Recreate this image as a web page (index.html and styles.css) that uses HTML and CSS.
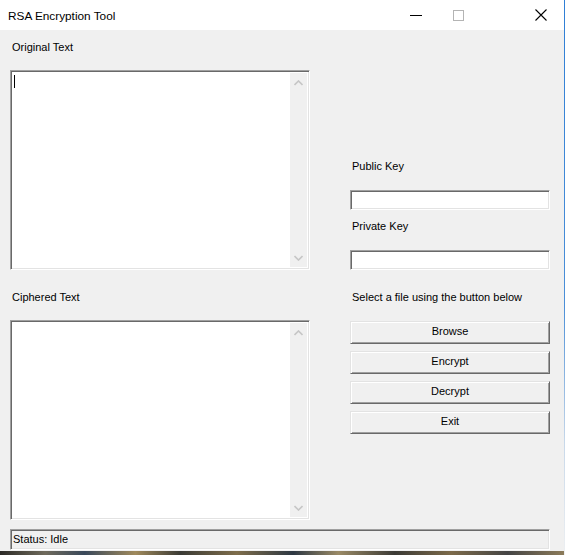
FILE: index.html
```html
<!DOCTYPE html>
<html>
<head>
<meta charset="utf-8">
<title>RSA Encryption Tool</title>
<link rel="stylesheet" href="styles.css">
</head>
<body>
<div class="screen">
  <div class="window">
    <div class="titlebar">
      <span class="title">RSA Encryption Tool</span>
      <div class="controls">
        <svg class="ic-min" width="12" height="11" viewBox="0 0 12 11"><line x1="0" y1="5.5" x2="12" y2="5.5" stroke="#000" stroke-width="1"/></svg>
        <svg class="ic-max" width="11" height="11" viewBox="0 0 11 11"><rect x="0.5" y="0.5" width="10" height="10" fill="none" stroke="#b4b4b4" stroke-width="1"/></svg>
        <svg class="ic-close" width="12" height="12" viewBox="0 0 12 12"><path d="M0.5 0.5 L11.5 11.5 M11.5 0.5 L0.5 11.5" stroke="#000" stroke-width="1.1" fill="none"/></svg>
      </div>
    </div>
    <div class="client">
      <div class="columns">
        <div class="col-left">
          <div class="label lbl-orig">Original Text</div>
          <div class="memo memo-orig">
            <div class="memo-text"><span class="caret"></span></div>
            <div class="vscroll">
              <svg class="arrow" width="9" height="6" viewBox="0 0 9 6"><polyline points="0.5,5 4.5,1 8.5,5" fill="none" stroke="#c6c6c6" stroke-width="1.6"/></svg>
              <svg class="arrow" width="9" height="6" viewBox="0 0 9 6"><polyline points="0.5,1 4.5,5 8.5,1" fill="none" stroke="#c6c6c6" stroke-width="1.6"/></svg>
            </div>
          </div>
          <div class="label lbl-ciph">Ciphered Text</div>
          <div class="memo memo-ciph">
            <div class="memo-text"></div>
            <div class="vscroll">
              <svg class="arrow" width="9" height="6" viewBox="0 0 9 6"><polyline points="0.5,5 4.5,1 8.5,5" fill="none" stroke="#c6c6c6" stroke-width="1.6"/></svg>
              <svg class="arrow" width="9" height="6" viewBox="0 0 9 6"><polyline points="0.5,1 4.5,5 8.5,1" fill="none" stroke="#c6c6c6" stroke-width="1.6"/></svg>
            </div>
          </div>
        </div>
        <div class="col-right">
          <div class="label lbl-pub">Public Key</div>
          <div class="field field-pub"></div>
          <div class="label lbl-priv">Private Key</div>
          <div class="field field-priv"></div>
          <div class="label lbl-select">Select a file using the button below</div>
          <div class="buttons">
            <div class="btn">Browse</div>
            <div class="btn">Encrypt</div>
            <div class="btn">Decrypt</div>
            <div class="btn">Exit</div>
          </div>
        </div>
      </div>
      <div class="status">Status: Idle</div>
    </div>
    <div class="desktop"></div>
  </div>
  <div class="edge"></div>
</div>
</body>
</html>
```
FILE: styles.css
```css
html, body {
  margin: 0;
  padding: 0;
  width: 565px;
  height: 555px;
  overflow: hidden;
  background: #f0f0f0;
}
body {
  font-family: "Liberation Sans", Arial, sans-serif;
  font-size: 11px;
  color: #000;
}
.screen {
  display: flex;
  width: 565px;
  height: 555px;
}
.window {
  width: 564px;
  display: flex;
  flex-direction: column;
}
.edge {
  width: 1px;
  height: 555px;
  background: linear-gradient(to bottom, #2f7fd6 0%, #4b8fd8 55%, #c9d9ea 80%, #eef0f2 100%);
}
.titlebar {
  height: 30px;
  background: #fff;
  display: flex;
  align-items: center;
  padding-left: 8px;
}
.title {
  font-size: 11.8px;
  line-height: 14px;
  margin-top: 1px;
}
.controls {
  margin-left: auto;
  display: flex;
  align-items: center;
  padding-right: 17px;
}
.ic-min { margin-right: 31px; }
.ic-max { margin-right: 71px; }

.client {
  height: 521px;
  background: #f0f0f0;
  padding-left: 10px;
  box-sizing: border-box;
}
.columns {
  display: flex;
  gap: 40px;
}
.col-left {
  width: 300px;
  display: flex;
  flex-direction: column;
}
.col-right {
  width: 200px;
  display: flex;
  flex-direction: column;
}
.label {
  height: 14px;
  line-height: 14px;
  white-space: nowrap;
  padding-left: 2px;
}
.lbl-orig { margin-top: 10px; }
.lbl-ciph { margin-top: 20px; }

.memo, .field, .status {
  box-sizing: border-box;
  border: 1px solid;
  border-color: #a0a0a0 #ffffff #ffffff #a0a0a0;
  box-shadow: inset 1px 1px 0 #696969, inset -1px -1px 0 #e3e3e3;
}
.memo {
  margin-top: 16px;
  height: 200px;
  background: #fff;
  display: flex;
  padding: 2px;
}
.memo-text {
  flex: 1;
  padding: 2px 0 0 1px;
}
.caret {
  display: block;
  width: 1px;
  height: 13px;
  background: #000;
}
.vscroll {
  width: 17px;
  background: #f0f0f0;
  display: flex;
  flex-direction: column;
  align-items: center;
  justify-content: space-between;
  padding: 7px 0 6px 0;
  box-sizing: border-box;
}
.arrow { display: block; }

.lbl-pub { margin-top: 129px; }
.field {
  height: 20px;
  background: #fff;
  margin-top: 17px;
}
.lbl-priv { margin-top: 9px; }
.lbl-select { margin-top: 20px; }

.buttons {
  margin-top: 17px;
  display: flex;
  flex-direction: column;
  gap: 7px;
}
.btn {
  box-sizing: border-box;
  width: 200px;
  height: 23px;
  background: #f0f0f0;
  border: 1px solid;
  border-color: #e3e3e3 #696969 #696969 #e3e3e3;
  box-shadow: inset 1px 1px 0 #ffffff, inset -1px -1px 0 #a0a0a0;
  text-align: center;
  line-height: 19px;
}

.status {
  margin-top: 9px;
  width: 540px;
  height: 21px;
  background: #f0f0f0;
  line-height: 19px;
  padding-left: 2px;
}
.desktop {
  height: 4px;
  background: linear-gradient(to right, #2c2a26 0%, #6f6a5c 8%, #39485a 15%, #a08a5c 24%, #3a3a34 32%, #7e6d4b 42%, #2d3742 52%, #9a8a66 60%, #3b3a35 70%, #7c6a4a 80%, #444 90%, #8c7b5a 100%);
}
```
